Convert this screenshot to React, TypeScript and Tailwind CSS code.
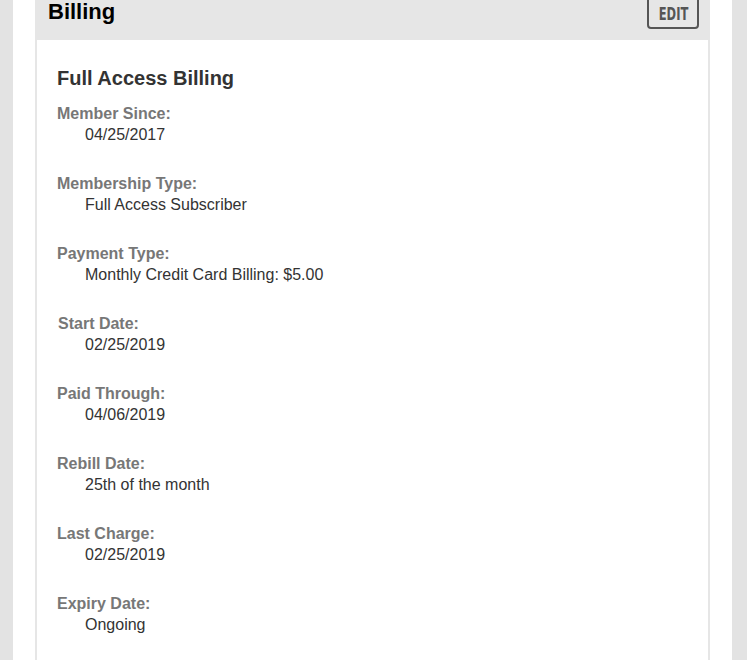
const rows = [
  { label: 'Member Since:', value: '04/25/2017' },
  { label: 'Membership Type:', value: 'Full Access Subscriber' },
  { label: 'Payment Type:', value: 'Monthly Credit Card Billing: $5.00' },
  { label: 'Start Date:', value: '02/25/2019', nudge: true },
  { label: 'Paid Through:', value: '04/06/2019' },
  { label: 'Rebill Date:', value: '25th of the month' },
  { label: 'Last Charge:', value: '02/25/2019' },
  { label: 'Expiry Date:', value: 'Ongoing' },
]

export default function App() {
  return (
    <div className="h-[660px] overflow-hidden bg-[#e3e3e3] font-['Liberation_Sans',Arial,sans-serif]">
      <div className="ml-[13px] w-[719px] h-full bg-white px-[22px]">
        {/* Billing panel */}
        <div className="border-2 border-t-0 border-[#e6e6e6] h-[720px]">
          <header className="h-[40px] bg-[#e6e6e6] flex items-start justify-between pl-[11px] pr-[9px]">
            <h2 className="text-[22px] leading-[24px] font-bold text-black">Billing</h2>
            <button className="-mt-[4px] h-[33px] w-[52px] border-2 border-[#555] rounded-[4px] flex items-center justify-center pt-[4px] text-[16px] font-bold text-[#555] font-['Liberation_Sans_Narrow','DejaVu_Sans_Condensed',sans-serif]">
              <span className="inline-block scale-x-[0.8] scale-y-[1.05]">EDIT</span>
            </button>
          </header>

          <div className="pl-[20px] pt-[26px]">
            <h3 className="text-[20px] leading-[24px] font-bold text-[#333] mb-[13px]">Full Access Billing</h3>
            {rows.map((r) => (
              <div key={r.label} className="mb-[28px] text-[16px] leading-[21px]">
                <div className={`font-bold text-[#777] ${r.nudge ? 'ml-px' : ''}`}>{r.label}</div>
                <div className="pl-[28px] text-[#333]">{r.value}</div>
              </div>
            ))}
          </div>
        </div>
      </div>
    </div>
  )
}
